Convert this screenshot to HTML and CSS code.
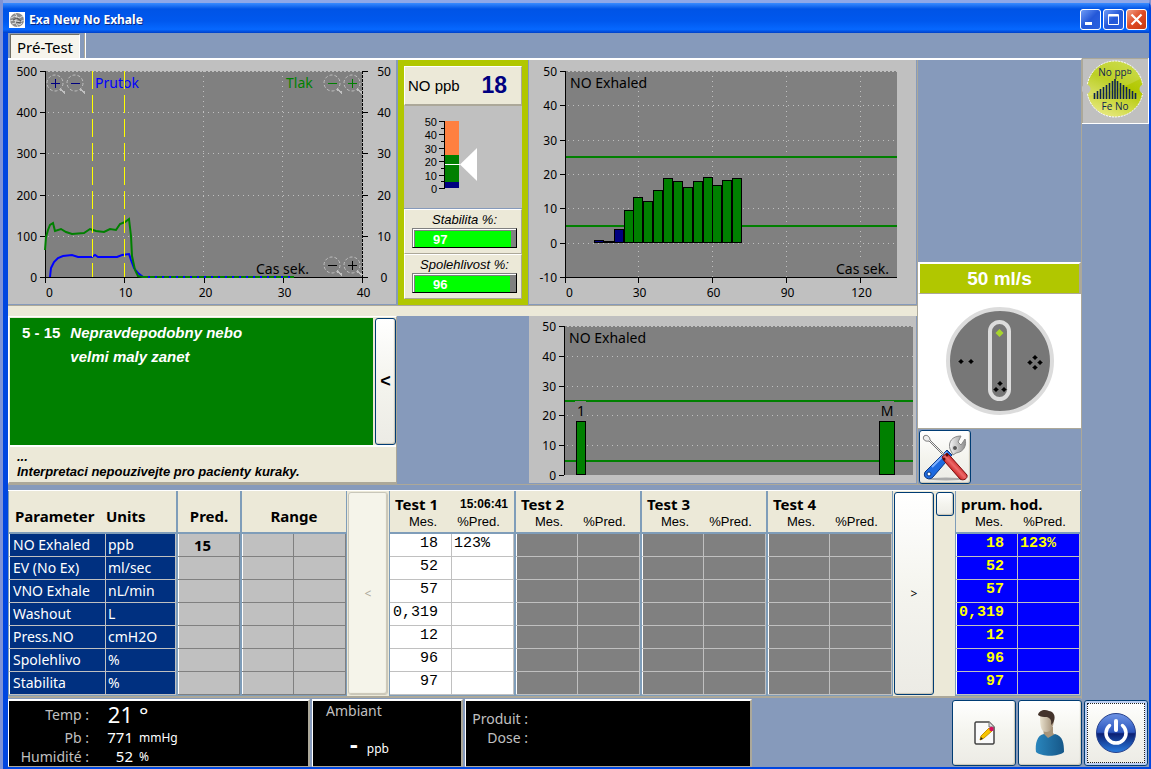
FILE: index.html
```html
<!DOCTYPE html>
<html lang="cs">
<head>
    <meta charset="UTF-8">
    <meta name="viewport" content="width=device-width, initial-scale=1.0">
    <title>Exa New No Exhale</title>
    <link rel="stylesheet" href="styles.css">
</head>
<body>
    <div class="window">
        <header class="titlebar">
            <svg class="app-icon" viewBox="0 0 16 16">
                <rect width="16" height="16" fill="#fff"/>
                <circle cx="8" cy="8" r="7" fill="#8c8c8c"/>
                <path d="M2 6q4-3 6-1t6-1M1 9q4-2 7 0t7-1M3 12q4-2 6 0t4-1M6 1q3 3 1 6t2 8" fill="none" stroke="#ddd"/>
                <path d="M4 8l4-2 4 3M7 11l5-1" fill="none" stroke="#555"/>
            </svg>
            <h1>Exa New No Exhale</h1>
            <button class="win-btn" aria-label="Minimize"><svg viewBox="0 0 19 19"><rect x="4" y="12" width="7" height="3" fill="#fff"/></svg></button>
            <button class="win-btn" aria-label="Maximize"><svg viewBox="0 0 19 19"><path d="M4.500 4.500h10v10h-10zM4 5.500h11M4 6h11" fill="none" stroke="#fff"/></svg></button>
            <button class="win-btn close" aria-label="Close"><svg viewBox="0 0 19 19"><path d="M4.500 4.500l10 10M14.500 4.500l-10 10" stroke="#fff" stroke-width="2.200"/></svg></button>
        </header>
        <nav class="tabs">
            <button class="tab">Pré-Test</button>
        </nav>
        <div class="workspace">
            <main class="main">
                <div class="upper">
                    <div class="charts">
                        <section class="panel"><svg id="flowChart" class="chart" viewBox="0 0 388 244"></svg></section>
                        <section class="no-panel">
                            <div class="no-value"><span>NO ppb</span><b>18</b></div>
                            <svg id="gauge" class="gauge" viewBox="0 0 118 102"></svg>
                            <div class="quality">
                                <span>Stabilita %:</span>
                                <div class="bar"><div class="fill" style="width:97%">97</div></div>
                            </div>
                            <div class="quality">
                                <span>Spolehlivost %:</span>
                                <div class="bar"><div class="fill" style="width:96%">96</div></div>
                            </div>
                        </section>
                        <section class="panel"><svg id="noChart" class="chart" viewBox="0 0 387 244"></svg></section>
                        <div class="divider"></div>
                        <section class="interpretation">
                            <div class="result">
                                <b>5 - 15</b>
                                <p>Nepravdepodobny nebo<br>velmi maly zanet</p>
                            </div>
                            <button class="xp-btn fold">&lt;</button>
                            <p class="note">...<br>Interpretaci nepouzivejte pro pacienty kuraky.</p>
                        </section>
                        <div></div>
                        <section class="panel"><svg id="testChart" class="chart" viewBox="0 0 387 167"></svg></section>
                    </div>
                    <aside class="flow">
                        <div class="rate">50 ml/s</div>
                        <div class="dial">
                            <svg viewBox="0 0 108 108">
                                <circle cx="54" cy="54" r="52" fill="#777" stroke="#dcdcdc" stroke-width="4"/>
                                <rect x="44" y="15" width="19" height="77" rx="9.500" fill="#777" stroke="#dcdcdc" stroke-width="4"/>
                                <path d="M53.500 22l4 4-4 4-4-4z" fill="#a8d62c"/>
                                <g stroke="#999" stroke-width=".6" fill="#000">
                                    <path d="M15 51.500l3 3-3 3-3-3zM25 51.500l3 3-3 3-3-3z"/>
                                    <path d="M89 47.500l3 3-3 3-3-3zM84 52.500l3 3-3 3-3-3zM94 52.500l3 3-3 3-3-3zM89 57.500l3 3-3 3-3-3z"/>
                                    <path d="M54 73.500l3 3-3 3-3-3zM50 79.500l3 3-3 3-3-3zM58 79.500l3 3-3 3-3-3z"/>
                                </g>
                            </svg>
                        </div>
                        <button class="xp-btn tools" aria-label="Settings">
                            <svg viewBox="0 0 50 52">
                                <defs>
                                    <linearGradient id="steel"><stop offset="0" stop-color="#f5f5f5"/><stop offset="1" stop-color="#8d8d8d"/></linearGradient>
                                    <linearGradient id="red" x1="0" y1="1" x2="1" y2="0"><stop offset="0" stop-color="#8c1010"/><stop offset=".35" stop-color="#c41818"/><stop offset=".5" stop-color="#ee6a6a"/><stop offset=".65" stop-color="#c41818"/><stop offset="1" stop-color="#a01010"/></linearGradient>
                                </defs>
                                <ellipse cx="26" cy="48" rx="18" ry="1.500" fill="#aaa"/>
                                <path d="M27 19l5 5L13 46c-3 4-11 1-8-5z" fill="#1f6be0" stroke="#0a3580"/>
                                <path d="M12 36L27 21" stroke="#7fb2ff" stroke-width="2"/>
                                <circle cx="9" cy="43" r="2" fill="#fff" stroke="#0a3580"/>
                                <path d="M30 18c-2-7 2-13 11-13l-3 6 3 3 4-6c2 6-1 13-9 14l-3 2z" fill="url(#steel)" stroke="#888"/>
                                <circle cx="35" cy="17" r="2.500" fill="#555" stroke="#ddd"/>
                                <path d="M4 5c3-2 6 1 6 4l14 14-1 1L9 10C5 11 2 8 4 5z" fill="#eee" stroke="#777"/>
                                <path d="M22 26l5-4 4 4 16 18c1 4-4 6-7 4L25 31z" fill="url(#red)" stroke="#7a0c0c"/>
                                <circle cx="27" cy="24" r="1.500" fill="#5b0707"/><circle cx="24" cy="28" r="1.500" fill="#5b0707"/>
                            </svg>
                        </button>
                    </aside>
                </div>
                <div class="results">
                    <table class="labels">
                        <colgroup><col class="name"><col></colgroup>
                        <thead><tr><th>Parameter</th><th>Units</th></tr></thead>
                        <tbody>
                            <tr><td>NO Exhaled</td><td>ppb</td></tr>
                            <tr><td>EV (No Ex)</td><td>ml/sec</td></tr>
                            <tr><td>VNO Exhale</td><td>nL/min</td></tr>
                            <tr><td>Washout</td><td>L</td></tr>
                            <tr><td>Press.NO</td><td>cmH2O</td></tr>
                            <tr><td>Spolehlivo</td><td>%</td></tr>
                            <tr><td>Stabilita</td><td>%</td></tr>
                        </tbody>
                    </table>
                    <table class="pred">
                        <thead><tr><th>Pred.</th></tr></thead>
                        <tbody>
                            <tr><td>15</td></tr>
                            <tr><td></td></tr><tr><td></td></tr><tr><td></td></tr>
                            <tr><td></td></tr><tr><td></td></tr><tr><td></td></tr>
                        </tbody>
                    </table>
                    <table class="pred">
                        <thead><tr><th colspan="2">Range</th></tr></thead>
                        <tbody>
                            <tr><td></td><td></td></tr><tr><td></td><td></td></tr>
                            <tr><td></td><td></td></tr><tr><td></td><td></td></tr>
                            <tr><td></td><td></td></tr><tr><td></td><td></td></tr>
                            <tr><td></td><td></td></tr>
                        </tbody>
                    </table>
                    <button class="xp-btn scroll" disabled>&lt;</button>
                    <table class="test filled">
                        <thead>
                            <tr><th class="title" colspan="2"><div>Test 1 <time>15:06:41</time></div></th></tr>
                            <tr><th class="mes">Mes.</th><th>%Pred.</th></tr>
                        </thead>
                        <tbody>
                            <tr><td>18</td><td>123%</td></tr>
                            <tr><td>52</td><td></td></tr>
                            <tr><td>57</td><td></td></tr>
                            <tr><td>0,319</td><td></td></tr>
                            <tr><td>12</td><td></td></tr>
                            <tr><td>96</td><td></td></tr>
                            <tr><td>97</td><td></td></tr>
                        </tbody>
                    </table>
                    <table class="test">
                        <thead>
                            <tr><th class="title" colspan="2"><div>Test 2</div></th></tr>
                            <tr><th class="mes">Mes.</th><th>%Pred.</th></tr>
                        </thead>
                        <tbody>
                            <tr><td></td><td></td></tr><tr><td></td><td></td></tr>
                            <tr><td></td><td></td></tr><tr><td></td><td></td></tr>
                            <tr><td></td><td></td></tr><tr><td></td><td></td></tr>
                            <tr><td></td><td></td></tr>
                        </tbody>
                    </table>
                    <table class="test">
                        <thead>
                            <tr><th class="title" colspan="2"><div>Test 3</div></th></tr>
                            <tr><th class="mes">Mes.</th><th>%Pred.</th></tr>
                        </thead>
                        <tbody>
                            <tr><td></td><td></td></tr><tr><td></td><td></td></tr>
                            <tr><td></td><td></td></tr><tr><td></td><td></td></tr>
                            <tr><td></td><td></td></tr><tr><td></td><td></td></tr>
                            <tr><td></td><td></td></tr>
                        </tbody>
                    </table>
                    <table class="test">
                        <thead>
                            <tr><th class="title" colspan="2"><div>Test 4</div></th></tr>
                            <tr><th class="mes">Mes.</th><th>%Pred.</th></tr>
                        </thead>
                        <tbody>
                            <tr><td></td><td></td></tr><tr><td></td><td></td></tr>
                            <tr><td></td><td></td></tr><tr><td></td><td></td></tr>
                            <tr><td></td><td></td></tr><tr><td></td><td></td></tr>
                            <tr><td></td><td></td></tr>
                        </tbody>
                    </table>
                    <button class="xp-btn scroll">&gt;</button>
                    <div class="small-col"><button class="xp-btn small" aria-label="Average"></button></div>
                    <table class="test average">
                        <thead>
                            <tr><th class="title" colspan="2"><div>prum. hod.</div></th></tr>
                            <tr><th class="mes">Mes.</th><th>%Pred.</th></tr>
                        </thead>
                        <tbody>
                            <tr><td>18</td><td>123%</td></tr>
                            <tr><td>52</td><td></td></tr>
                            <tr><td>57</td><td></td></tr>
                            <tr><td>0,319</td><td></td></tr>
                            <tr><td>12</td><td></td></tr>
                            <tr><td>96</td><td></td></tr>
                            <tr><td>97</td><td></td></tr>
                        </tbody>
                    </table>
                </div>
            </main>
            <div class="side">
                <div class="badge">
                    <svg viewBox="0 0 66 65">
                        <defs><linearGradient id="lime" x1=".7" y1="0" x2=".3" y2="1"><stop offset="0" stop-color="#c3d62c"/><stop offset=".4" stop-color="#b1c700"/><stop offset="1" stop-color="#e9ea84"/></linearGradient></defs>
                        <circle cx="33" cy="31" r="28" fill="url(#lime)" stroke="#fff" stroke-dasharray="2 1"/>
                        <path d="M6 38Q35 34 60 20A28 28 0 0 0 15 10Q6 18 5 26z" fill="#fff" opacity=".15"/>
                        <circle cx="4" cy="31" r="4.500" fill="#c0c0c0"/><circle cx="62" cy="31" r="4.500" fill="#c0c0c0"/>
                        <path d="M12.500 35v6M15.500 33v8M18.500 31v10M21.500 29v12M24.500 27v14M27.500 25v16M30.500 23v18M33 21v20M35.500 23v18M38.500 25v16M41.500 27v14M44.500 29v12M47.500 31v10M50.500 33v8M53.500 35v6" stroke="#0c2350" stroke-width="1.600"/>
                        <text x="33" y="18" text-anchor="middle">No pp<tspan class="sup" dy="-2">b</tspan></text>
                        <text x="33" y="52" text-anchor="middle">Fe No</text>
                    </svg>
                </div>
            </div>
        </div>
        <footer class="status">
            <table class="box ambient">
                <tr><th>Temp :</th><td class="big">21</td><td class="degree">°</td></tr>
                <tr><th>Pb :</th><td>771</td><td class="unit">mmHg</td></tr>
                <tr><th>Humidité :</th><td>52</td><td class="unit">%</td></tr>
            </table>
            <div class="box no-ambient">
                <p>Ambiant</p>
                <p class="reading"><b>-</b> ppb</p>
            </div>
            <div class="box product">
                <p>Produit :</p>
                <p>Dose :</p>
            </div>
            <div class="actions">
                <button class="xp-btn" aria-label="Edit">
                    <svg viewBox="0 0 62 64">
                        <path d="M23 21h13l5 5v16l-1 1H23l-1-1V22z" fill="#fafafa" stroke="#444" stroke-width="1.500"/>
                        <path d="M36 21v5h5" fill="#ddd" stroke="#777"/>
                        <path d="M27 39l1-4 8-8 3 3-8 7z" fill="#f7c500" stroke="#c99300"/>
                        <path d="M27 39l1-3 2 2z" fill="#222"/>
                        <circle cx="38.500" cy="28" r="2.200" fill="#d8105c"/>
                    </svg>
                </button>
                <button class="xp-btn" aria-label="Patient">
                    <svg viewBox="0 0 62 64">
                        <defs><linearGradient id="shirt"><stop offset="0" stop-color="#2a86bd"/><stop offset="1" stop-color="#165788"/></linearGradient>
                        <linearGradient id="skin"><stop offset="0" stop-color="#e9e2cf"/><stop offset="1" stop-color="#a08c72"/></linearGradient></defs>
                        <path d="M24 26h10v6l2 2-9 8-2-7z" fill="#a8957a"/>
                        <path d="M17 51c-1-8 1-17 8-18l4 4 7-4c8 2 9 9 9 18-6 5-22 5-28 0z" fill="url(#shirt)"/>
                        <path d="M21 14c0 8 0 17 6 17s8-7 8-15l-6-5z" fill="url(#skin)"/>
                        <path d="M19 14c1-5 7-6 11-4 6 1 7 7 4 12l-2 2c1-5-1-7-4-8-4 0-6 0-9-2z" fill="#43332b"/>
                    </svg>
                </button>
                <button class="xp-btn focused" aria-label="Power">
                    <svg viewBox="0 0 62 64">
                        <defs><linearGradient id="power" x2="0" y2="1"><stop offset="0" stop-color="#6f95e6"/><stop offset=".48" stop-color="#2b55bd"/><stop offset=".52" stop-color="#0b1f72"/><stop offset="1" stop-color="#2a7ee0"/></linearGradient></defs>
                        <circle cx="31" cy="32" r="19.500" fill="url(#power)" stroke="#27418c"/>
                        <path d="M24.500 24.500a10 10 0 1 0 13 0" fill="none" stroke="#fff" stroke-width="3.500" stroke-linecap="round"/>
                        <path d="M31 20v9" stroke="#fff" stroke-width="4" stroke-linecap="round"/>
                    </svg>
                </button>
            </div>
        </footer>
    </div>
    <script src="script.js"></script>
</body>
</html>
```
FILE: styles.css
```css
*{
    box-sizing: border-box;
}
body{
    margin: 0;
    background-color: #7f93d6;
    font-family: "Noto Sans", "Open Sans", sans-serif;
    font-size: 14px;
    color: #000;
}
h1,p{
    margin: 0;
}
button{
    padding: 0;
    font-family: inherit;
    color: #000;
}
svg{
    display: block;
}
.window{
    display: flex;
    flex-direction: column;
    min-height: 100vh;
    border: solid #0046e0;
    border-width: 0 2px 2px 5px;
    border-radius: 10px 8px 0 0;
    margin-left: 3px;
    background-color: #869abb;
}
.titlebar{
    display: flex;
    align-items: center;
    gap: 2px;
    height: 33px;
    margin-left: -5px;
    padding: 3px 2px 0 6px;
    border-top: 3px solid #8fa8e8;
    background-image: linear-gradient(#3a8cff, #0054e6 20%, #0058ee 60%, #0668ff 88%, #0040c8);
}
.titlebar h1{
    flex: 1;
    margin-left: 2px;
    font-size: 12px;
    color: #fff;
    text-shadow: 1px 1px #0a2a80;
}
.app-icon{
    width: 16px;
    height: 16px;
}
.win-btn{
    width: 21px;
    height: 21px;
    border: 1px solid #fff;
    border-radius: 3px;
    background-image: linear-gradient(135deg, #6f9bf5, #2458d8 50%, #2b62e0);
}
.win-btn.close{
    background-image: linear-gradient(135deg, #f0a088, #de4a24 50%, #c8380f);
}
.tabs{
    height: 25px;
    display: flex;
    gap: 4px;
    padding-left: 2px;
}
.tabs::after{
    content: "";
    border-left: 1px solid #aca899;
    border-right: 1px solid #fff;
}
.tab{
    width: 70px;
    border: solid #716f64;
    border-width: 1px 0 0 1px;
    border-right: 1px solid #fff;
    margin-top: 1px;
    background-color: #f6f4ec;
    font-size: 15px;
    line-height: 20px;
}
.workspace{
    display: flex;
    flex: 1;
}
.main{
    flex: 1;
    border-top: 2px solid #fff;
    border-right: 1px solid #aca899;
}
.upper{
    display: flex;
    height: 425px;
    border-bottom: 1px solid #aca899;
}
/* charts */
.charts{
    flex: 1;
    display: grid;
    grid-template-columns: 389fr 132px 388fr;
    grid-template-rows: 245px 11px 168px;
}
.panel{
    background-color: #c0c0c0;
    border: solid #869abb;
    border-width: 0 1px 1px 0;
}
.chart{
    width: 100%;
    height: 100%;
    font-size: 12px;
    overflow: visible;
}
.chart .caption{
    font-size: 14px;
}
.divider{
    grid-column: 1 / 4;
    border-top: 1px solid #aca899;
    background-color: #ece9d8;
}
.no-panel{
    display: flex;
    flex-direction: column;
    border: 6px solid #b1c700;
    margin: 0 1px;
    font-family: "Liberation Sans", sans-serif;
}
.no-value{
    display: flex;
    justify-content: space-between;
    align-items: center;
    height: 40px;
    padding: 0 14px 0 3px;
    border: 1px solid #fff;
    border-right-color: #aca899;
    border-bottom: 2px solid #aca899;
    background-color: #ece9d8;
    font-size: 15px;
}
.no-value b{
    font-size: 23px;
    color: #000080;
}
.gauge{
    flex: 1;
    width: 100%;
    min-height: 0;
    margin-bottom: 1px;
    background-color: #c0c0c0;
    font-size: 11px;
}
.quality{
    height: 45px;
    padding: 1px 4px 0 7px;
    border: 1px solid #fff;
    border-right-color: #aca899;
    border-bottom-color: #aca899;
    background-color: #ece9d8;
    font-size: 13px;
    font-style: italic;
    text-align: center;
}
.quality span{
    display: block;
    line-height: 17px;
}
.bar{
    height: 20px;
    padding: 2px;
    border: 1px solid #000;
    border-top-color: #808080;
    border-left-color: #808080;
    background-color: #808080;
    box-shadow: inset 1px 1px #fff;
}
.fill{
    padding: 2px 0 0 18px;
    background-color: #00ff00;
    color: #fff;
    font-size: 13px;
    font-weight: bold;
    font-style: normal;
    line-height: 14px;
    text-align: left;
}
/* interpretation */
.interpretation{
    display: grid;
    grid-template-columns: 1fr 21px;
    grid-template-rows: 127px 1fr;
    column-gap: 2px;
    padding: 1px 0 0 1px;
    border: solid;
    border-width: 1px 1px 2px 1px;
    border-color: #fff #aca899 #aca899 #fff;
    background-color: #ece9d8;
    font-family: "Liberation Sans", sans-serif;
    font-weight: bold;
}
.result{
    display: flex;
    gap: 10px;
    padding: 3px 12px;
    background-color: #008000;
    color: #fff;
    font-size: 15px;
    line-height: 24px;
}
.result p,.note{
    font-style: italic;
}
.note{
    grid-column: 1 / 3;
    padding: 2px 7px 0;
    font-size: 13px;
    line-height: 15px;
    border-top: 2px solid #fff;
}
.xp-btn{
    border: 1px solid #003c74;
    border-radius: 3px;
    background-image: linear-gradient(#fff, #f4f4ee 50%, #ecebe5);
    box-shadow: inset -1px -1px 1px #c9c5b5;
}
.fold{
    font-size: 18px;
    font-weight: bold;
}
/* flow */
.flow{
    display: flex;
    flex-direction: column;
    width: 164px;
    padding: 202px 0 0 0;
    border-left: 1px solid #aca899;
}
.rate{
    height: 32px;
    border: 2px solid #fff;
    border-right-color: #aca899;
    border-bottom: 1px solid #aca899;
    background-color: #b1c700;
    color: #fff;
    font-family: "Liberation Sans", sans-serif;
    font-size: 19px;
    font-weight: bold;
    line-height: 30px;
    text-align: center;
}
.dial{
    display: flex;
    justify-content: center;
    height: 135px;
    padding-top: 13px;
    border-bottom: 1px solid #aca899;
    background-color: #fff;
}
.dial svg{
    width: 108px;
    height: 108px;
}
.tools{
    width: 52px;
    height: 54px;
    margin: 1px 0 0 1px;
}
/* results */
.results{
    display: grid;
    grid-template-columns: 169fr 64fr 106fr 42px repeat(4, 126fr) 42px 20px 126fr;
    margin-top: 6px;
    border-bottom: 2px solid #aca899;
    background-color: #ece9d8;
    box-shadow: 0 -1px #fff;
}
.results table{
    width: 100%;
    table-layout: fixed;
    border-spacing: 0;
    border: solid #7f9db9;
    border-width: 0 1px 1px 1px;
    background-color: #fff;
}
.results th{
    height: 43px;
    padding: 9px 0 0;
    border-bottom: 2px solid #7f9db9;
    background-color: #ece9d8;
    font-size: 15px;
    line-height: 20px;
}
.results td{
    height: 23px;
    padding: 0;
    border: solid #c0c0c0;
    border-width: 0 1px 1px 0;
    line-height: 22px;
}
.results td:first-child{
    box-shadow: inset 1px 0 #fff;
}
.labels .name{
    width: 97px;
}
.labels th{
    text-align: left;
}
.results .labels th:first-child{
    padding-left: 6px;
}
.results .labels td{
    padding-left: 4px;
    background-color: #003080;
    color: #fff;
}
.results .labels td + td{
    padding-left: 2px;
}
.results .pred td{
    padding-right: 12px;
    border-color: #808080;
    background-color: #c0c0c0;
    font-size: 15px;
    font-weight: bold;
    text-align: center;
}
.results .test th{
    height: 19px;
    padding: 0 9px 0 0;
    font-family: "Liberation Sans", sans-serif;
    font-size: 13px;
    font-weight: normal;
    line-height: 14px;
    vertical-align: top;
}
.results .test .mes{
    padding: 0 0 0 4px;
}
.results .test .title{
    height: 24px;
    padding: 3px 6px 0 5px;
    border: 0;
    font-family: inherit;
    font-size: 15px;
    font-weight: bold;
    text-align: left;
}
.title div{
    display: flex;
    justify-content: space-between;
    align-items: center;
    line-height: 20px;
}
.title time{
    font-family: "Liberation Sans", sans-serif;
    font-size: 12px;
}
.test td{
    background-color: #808080;
    font-family: "Liberation Mono", monospace;
    font-size: 15px;
}
.results .test td{
    line-height: 20px;
    padding-bottom: 2px;
}
.test td:first-child{
    text-align: right;
}
.results .test td:first-child{
    padding-right: 13px;
}
.results .test td:last-child{
    padding-left: 2px;
}
.results .filled td{
    background-color: #fff;
}
.results .average td{
    background-color: #0000ff;
    color: #ffff00;
    font-weight: bold;
}
.scroll{
    margin: 1px;
    font-size: 12px;
}
.scroll:disabled{
    border-color: #c9c7ba;
    background-image: none;
    background-color: #f5f4ea;
    color: #aca899;
}
.small-col{
    padding: 1px;
}
.small{
    width: 18px;
    height: 24px;
}
/* side */
.side{
    width: 67px;
}
.badge{
    height: 66px;
    border: solid #fff;
    border-width: 0 1px 1px 0;
    box-shadow: inset 1px 1px #aca899;
    background-color: #c0c0c0;
    font-family: "Open Sans", sans-serif;
    font-size: 10px;
    fill: #0c2350;
}
.badge .sup{
    font-size: 8px;
}
/* status */
.status{
    display: flex;
    gap: 2px;
    height: 68px;
    font-size: 14px;
    color: #fff;
}
.box{
    border: solid;
    border-width: 2px 2px 1px 1px;
    border-color: #fff #aca899 #aca899 #fff;
    background-color: #000;
}
.ambient{
    width: 302px;
    table-layout: fixed;
    border-spacing: 0;
}
.ambient th{
    width: 80px;
    padding: 0;
    font-weight: normal;
    color: #c0c0c0;
    text-align: right;
}
.ambient td{
    width: 44px;
    padding: 0;
    font-size: 15px;
    line-height: 19px;
    text-align: right;
}
.ambient td:last-child{
    width: auto;
    padding-left: 6px;
    text-align: left;
}
.ambient .big,.ambient .degree{
    font-size: 22px;
    line-height: 26px;
}
.ambient .unit{
    font-size: 12px;
}
.no-ambient{
    width: 151px;
    color: #c0c0c0;
    padding-left: 13px;
}
.no-ambient .reading{
    padding: 14px 0 0 24px;
    color: #fff;
    font-size: 12px;
    line-height: 20px;
}
.reading b{
    font-size: 24px;
    margin-right: 6px;
}
.product{
    width: 287px;
    padding: 8px 0 0 2px;
    color: #c0c0c0;
}
.product p{
    width: 60px;
    line-height: 19px;
    text-align: right;
    white-space: nowrap;
}
.actions{
    display: flex;
    gap: 2px;
    margin-left: auto;
    padding: 1px 1px 1px 0;
}
.actions .xp-btn{
    width: 64px;
}
.actions .focused{
    box-shadow: inset 0 0 0 2px #bcd0f4;
    outline: 1px dotted #222;
    outline-offset: -4px;
}
```
FILE: script.js
```js
var NS = 'http://www.w3.org/2000/svg';

function add(svg, name, attrs, text) {
    var el = document.createElementNS(NS, name);
    for (var key in attrs) {
        el.setAttribute(key, attrs[key]);
    }
    if (text !== undefined) {
        el.textContent = text;
    }
    svg.appendChild(el);
    return el;
}
function line(svg, x1, y1, x2, y2, color, width, dash) {
    add(svg, 'path', {
        d: 'M' + x1 + ' ' + y1 + 'L' + x2 + ' ' + y2,
        stroke: color, 'stroke-width': width || 1,
        'stroke-dasharray': dash || 'none', 'shape-rendering': 'crispEdges'
    });
}
function label(svg, x, y, text, anchor, color, cls) {
    add(svg, 'text', {x: x, y: y, 'text-anchor': anchor, fill: color || '#000', 'class': cls || ''}, text);
}
function rect(svg, x, y, w, h, fill, stroke) {
    add(svg, 'rect', {x: x, y: y, width: w, height: h, fill: fill, stroke: stroke || 'none', 'shape-rendering': 'crispEdges'});
}
//plot area with the left axis and horizontal grid
function plot(svg, left, top, right, bottom, max, min) {
    rect(svg, left, top, right - left, bottom - top, '#808080');
    var steps = max === 500 ? 5 : (max - min) / 10;
    for (var i = 0; i <= steps; i++) {
        var y = Math.round(top + (bottom - top) * i / steps) + 0.5;
        line(svg, left + 3, y, right, y, '#c0c0c0', 1, i ? '1 4' : '2 2');
        line(svg, left - 5, y, left, y, '#000');
        label(svg, left - 8, y + 4, max - (max - min) * i / steps, 'end');
    }
    line(svg, left + 0.5, top, left + 0.5, bottom, '#000');
}
function lens(svg, x, y, sign, color) {
    add(svg, 'circle', {cx: x, cy: y, r: 8, fill: 'none', stroke: '#c0c0c0', 'stroke-dasharray': '3 2'});
    line(svg, x + 5, y + 6, x + 10, y + 10, '#c0c0c0', 2);
    line(svg, x - 4, y + 0.5, x + 5, y + 0.5, color);
    if (sign === '+') {
        line(svg, x + 0.5, y - 4, x + 0.5, y + 5, color);
    }
}

//flow and pressure
var flow = document.getElementById('flowChart');
plot(flow, 37, 11, 354, 217, 500, 0);
line(flow, 195.5, 11, 195.5, 217, '#c0c0c0', 1, '1 4');
line(flow, 274.5, 11, 274.5, 197, '#c0c0c0', 1, '1 4');
line(flow, 354.5, 11, 354.5, 217, '#000', 1, '3 1');
line(flow, 37, 217.5, 360, 217.5, '#000');
for (var i = 0; i <= 5; i++) {
    var y = Math.round(11 + 41.2 * i) + 0.5;
    line(flow, 355, y, 360, y, '#000');
    label(flow, 376, y + 4, 50 - i * 10, 'middle');
}
for (i = 0; i <= 4; i++) {
    var x = Math.round(37 + 79.25 * i) + 0.5;
    line(flow, x, 217, x, 223, '#000');
    label(flow, x + (i ? 1 : 4), 237, i * 10, 'middle');
}
lens(flow, 47, 23, '+', '#000080');
lens(flow, 67, 23, '-', '#000080');
lens(flow, 324, 23, '-', '#008000');
lens(flow, 344, 23, '+', '#008000');
lens(flow, 324, 205, '-', '#000');
lens(flow, 344, 205, '+', '#000');
label(flow, 87, 28, 'Prutok', 'start', '#0000ff', 'caption');
label(flow, 278, 28, 'Tlak', 'start', '#008000', 'caption');
label(flow, 248, 214, 'Cas sek.', 'start', '#000', 'caption');
add(flow, 'polyline', {
    points: '42,217 43,208 46,202 50,198 55,196 64,195 70,197 84,197 87,195 90,197 109,197 114,195 121,194 123,200 126,208 130,213 135,217 286,217',
    fill: 'none', stroke: '#0000ff', 'stroke-width': 2
});
add(flow, 'polyline', {
    points: '37,190 38,177 40,170 42,165 45,163 47,171 53,169 58,172 64,174 76,173 82,169 88,171 96,172 102,169 108,170 112,164 117,162 121,159 123,176 124,196 127,210 130,216 135,217',
    fill: 'none', stroke: '#008000', 'stroke-width': 2
});
line(flow, 135, 217, 286, 217, '#008000', 2, '5 2');
line(flow, 84.5, 11, 84.5, 217, '#ffff00', 1, '18 6');
line(flow, 116.5, 11, 116.5, 217, '#ffff00', 1, '18 6');

//NO exhaled over time
var no = document.getElementById('noChart');
plot(no, 36, 11, 368, 217, 50, -10);
line(no, 36, 217.5, 368, 217.5, '#000');
for (i = 0; i <= 4; i++) {
    x = i ? 35.5 + i * 74 : 36.5;
    line(no, x, 217, x, 223, '#000');
    if (i) {
        line(no, x, 11, x, i === 4 ? 197 : 217, '#c0c0c0', 1, '1 4');
    }
    label(no, x + (i ? 1 : 4), 237, i * 30, 'middle');
}
line(no, 37, 97, 368, 97, '#008000', 2);
line(no, 37, 166, 368, 166, '#008000', 2);
var tops = [180, 181, 169, 150, 137, 141, 130, 118, 121, 127, 121, 117, 125, 120, 118];
tops.forEach(function (top, n) {
    var bx = 65 + Math.round(n * 9.87);
    rect(no, bx + 0.5, top + 0.5, 9, 182 - top, n < 3 ? '#000080' : '#008000', '#000');
});
label(no, 41, 28, 'NO Exhaled', 'start', '#000', 'caption');
label(no, 307, 214, 'Cas sek.', 'start', '#000', 'caption');

//NO exhaled per test
var test = document.getElementById('testChart');
plot(test, 35, 10, 384, 159, 50, 0);
line(test, 36, 85, 384, 85, '#008000', 2);
line(test, 36, 145, 384, 145, '#008000', 2);
rect(test, 46, 85, 11, 16, '#808080');
rect(test, 351, 85, 14, 16, '#808080');
rect(test, 47.5, 105.5, 9, 53, '#008000', '#000');
rect(test, 350.5, 105.5, 15, 53, '#008000', '#000');
label(test, 40, 27, 'NO Exhaled', 'start', '#000', 'caption');
label(test, 52, 100, '1', 'middle', '#000', 'caption');
label(test, 358, 100, 'M', 'middle', '#000', 'caption');

//NO gauge
var gauge = document.getElementById('gauge');
rect(gauge, 41, 15, 14, 34, '#ff8040');
rect(gauge, 41, 49, 14, 27, '#008000');
rect(gauge, 41, 76, 14, 6, '#000080');
line(gauge, 40.5, 15, 40.5, 83, '#000');
for (i = 0; i <= 10; i++) {
    y = Math.round(15 + i * 6.7) + 0.5;
    line(gauge, i % 2 ? 37 : 35, y, 41, y, '#000');
    if (i % 2 === 0) {
        label(gauge, 33, y + 4, 50 - i * 5, 'end');
    }
}
line(gauge, 41, 58.5, 56, 58.5, '#fff');
add(gauge, 'path', {d: 'M56 58.5L73 42V75z', fill: '#fff'});
```
